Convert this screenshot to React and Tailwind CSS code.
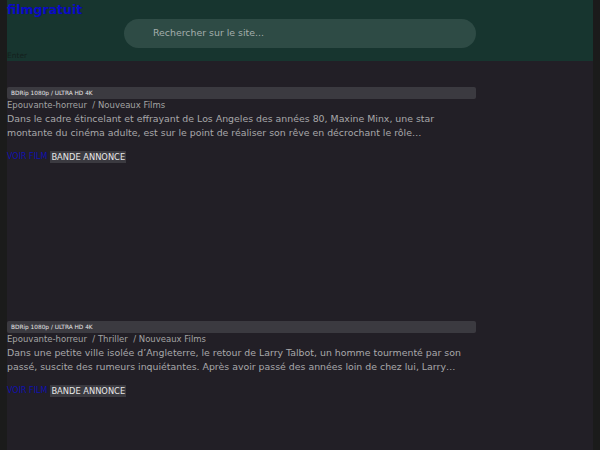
import React from "react";

const films = [
  {
    quality: "BDRip 1080p / ULTRA HD 4K",
    genres: ["Epouvante-horreur", "Nouveaux Films"],
    text: "Dans le cadre étincelant et effrayant de Los Angeles des années 80, Maxine Minx, une star montante du cinéma adulte, est sur le point de réaliser son rêve en décrochant le rôle…",
  },
  {
    quality: "BDRip 1080p / ULTRA HD 4K",
    genres: ["Epouvante-horreur", "Thriller", "Nouveaux Films"],
    text: "Dans une petite ville isolée d’Angleterre, le retour de Larry Talbot, un homme tourmenté par son passé, suscite des rumeurs inquiétantes. Après avoir passé des années loin de chez lui, Larry…",
  },
];

function FilmCard({ film }) {
  return (
    <div className="w-[469px] h-[234px]">
      <div className="h-[12px] bg-[#3b3a40] rounded-[2px] px-[4px] text-[5.8px] leading-[12px] text-[#e6e6e6]">
        {film.quality}
      </div>
      <div className="text-[8.5px] leading-[12px] text-[#a3a3a3] whitespace-pre">
        {film.genres.join("  / ")}
      </div>
      <p className="mt-[1px] text-[9.4px] leading-[14px] text-[#a8a8aa]">{film.text}</p>
      <div className="mt-[11px] flex items-center gap-[3px]">
        <a className="text-[8px] text-[#1010b0]">VOIR FILM</a>
        <span className="bg-[#3b3a40] text-[#e8e8e8] text-[8.3px] leading-[12px] px-[1px]">BANDE ANNONCE</span>
      </div>
    </div>
  );
}

export default function App() {
  return (
    <div className="min-h-[450px] bg-[#1b1b1b] px-[7px] font-['DejaVu_Sans',sans-serif]">
      <div className="min-h-[450px] bg-[#221f26]">
        <header className="h-[61px] bg-[#17352f]">
          <h1 className="text-[12.5px] leading-[19px] font-bold text-[#0a0ac8]">filmgratuit</h1>
          <div className="ml-[117px] w-[352px] h-[29px] rounded-full bg-[#2e4b45] pl-[29px] flex items-center text-[9.4px] text-[#a4aeac]">
            Rechercher sur le site...
          </div>
          <div className="text-[7.5px] leading-[10px] mt-[3px] text-[#14201d]">Enter</div>
        </header>
        <main className="pt-[26px]">
          {films.map((f, i) => (
            <FilmCard key={i} film={f} />
          ))}
        </main>
      </div>
    </div>
  );
}
